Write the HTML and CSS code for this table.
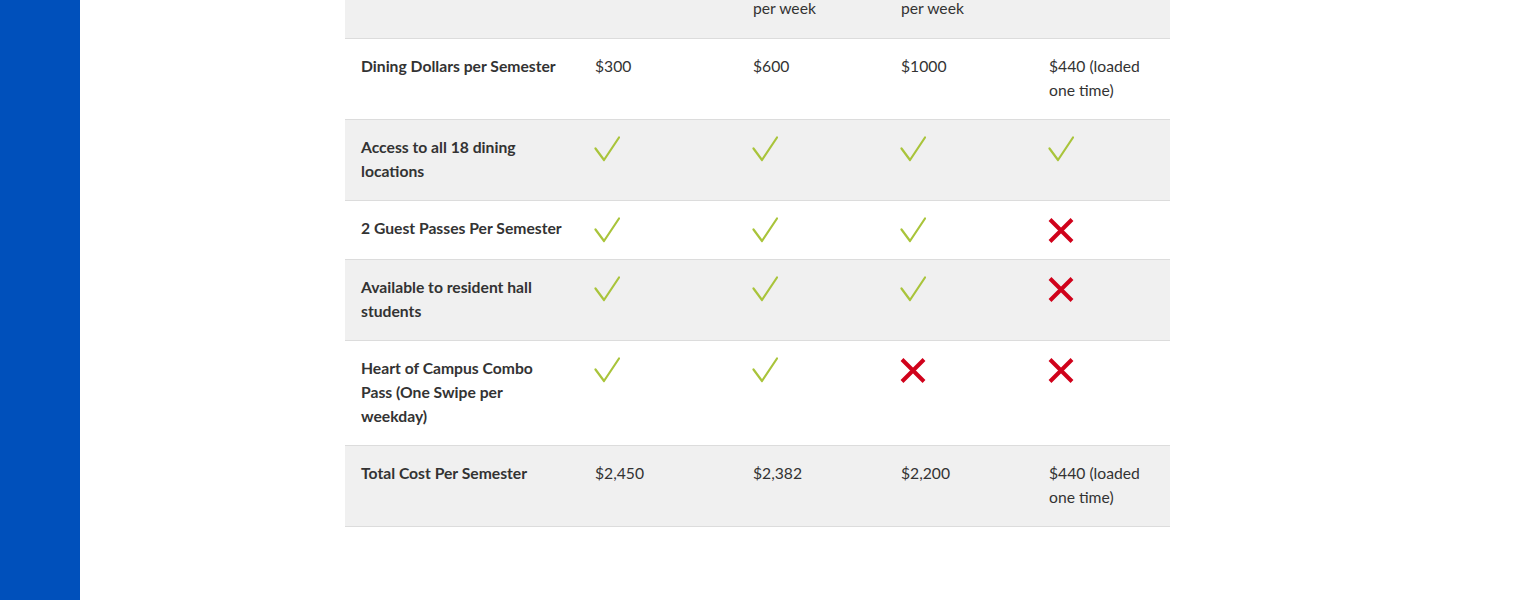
FILE: index.html
```html
<!DOCTYPE html>
<html lang="en">
<head>
<meta charset="utf-8">
<title>Meal Plans</title>
<link rel="stylesheet" href="styles.css">
</head>
<body>
<div class="page">
  <aside class="sidebar"></aside>
  <main class="main">
    <table class="plans">
      <tbody>
        <tr class="head-row">
          <td class="label"></td>
          <td></td>
          <td>per week</td>
          <td>per week</td>
          <td></td>
        </tr>
        <tr>
          <td class="label">Dining Dollars per Semester</td>
          <td>$300</td>
          <td>$600</td>
          <td>$1000</td>
          <td>$440 (loaded one time)</td>
        </tr>
        <tr>
          <td class="label">Access to all 18 dining locations</td>
          <td><svg class="ico" viewBox="0 0 26 26"><polyline class="yes" points="1.5,12.5 10,24 25,1.5"/></svg></td>
          <td><svg class="ico" viewBox="0 0 26 26"><polyline class="yes" points="1.5,12.5 10,24 25,1.5"/></svg></td>
          <td><svg class="ico" viewBox="0 0 26 26"><polyline class="yes" points="1.5,12.5 10,24 25,1.5"/></svg></td>
          <td><svg class="ico" viewBox="0 0 26 26"><polyline class="yes" points="1.5,12.5 10,24 25,1.5"/></svg></td>
        </tr>
        <tr>
          <td class="label">2 Guest Passes Per Semester</td>
          <td><svg class="ico" viewBox="0 0 26 26"><polyline class="yes" points="1.5,12.5 10,24 25,1.5"/></svg></td>
          <td><svg class="ico" viewBox="0 0 26 26"><polyline class="yes" points="1.5,12.5 10,24 25,1.5"/></svg></td>
          <td><svg class="ico" viewBox="0 0 26 26"><polyline class="yes" points="1.5,12.5 10,24 25,1.5"/></svg></td>
          <td><svg class="ico" viewBox="0 0 26 26"><path class="no" d="M2 2.5L24 24.5M24 2.5L2 24.5"/></svg></td>
        </tr>
        <tr>
          <td class="label">Available to resident hall students</td>
          <td><svg class="ico" viewBox="0 0 26 26"><polyline class="yes" points="1.5,12.5 10,24 25,1.5"/></svg></td>
          <td><svg class="ico" viewBox="0 0 26 26"><polyline class="yes" points="1.5,12.5 10,24 25,1.5"/></svg></td>
          <td><svg class="ico" viewBox="0 0 26 26"><polyline class="yes" points="1.5,12.5 10,24 25,1.5"/></svg></td>
          <td><svg class="ico" viewBox="0 0 26 26"><path class="no" d="M2 2.5L24 24.5M24 2.5L2 24.5"/></svg></td>
        </tr>
        <tr>
          <td class="label">Heart of Campus Combo Pass (One Swipe per weekday)</td>
          <td><svg class="ico" viewBox="0 0 26 26"><polyline class="yes" points="1.5,12.5 10,24 25,1.5"/></svg></td>
          <td><svg class="ico" viewBox="0 0 26 26"><polyline class="yes" points="1.5,12.5 10,24 25,1.5"/></svg></td>
          <td><svg class="ico" viewBox="0 0 26 26"><path class="no" d="M2 2.5L24 24.5M24 2.5L2 24.5"/></svg></td>
          <td><svg class="ico" viewBox="0 0 26 26"><path class="no" d="M2 2.5L24 24.5M24 2.5L2 24.5"/></svg></td>
        </tr>
        <tr>
          <td class="label">Total Cost Per Semester</td>
          <td>$2,450</td>
          <td>$2,382</td>
          <td>$2,200</td>
          <td>$440 (loaded one time)</td>
        </tr>
      </tbody>
    </table>
  </main>
</div>
</body>
</html>
```

FILE: styles.css
```css
html, body {
  margin: 0;
  padding: 0;
  background: #ffffff;
}
body {
  font-family: Lato, "Open Sans", sans-serif;
  color: #333333;
  overflow: hidden;
}
.page {
  display: flex;
  min-height: 600px;
}
.sidebar {
  flex: 0 0 80px;
  background: #0050bb;
  min-height: 600px;
}
.main {
  flex: 1;
  padding-left: 265px;
  margin-top: -4px;
}
.plans {
  width: 825px;
  border-collapse: collapse;
  font-size: 15.7px;
  line-height: 24px;
}
.plans td {
  padding: 15px 16px 17px;
  vertical-align: top;
  border-bottom: 1px solid #dcdcdc;
  text-align: left;
}
.plans td:nth-child(1) { width: 204px; padding-right: 14px; }
.plans td:nth-child(2) { width: 126px; }
.plans td:nth-child(3) { width: 116px; }
.plans td:nth-child(4) { width: 116px; }
.plans td:nth-child(5) { width: 105px; }
.plans tr:nth-child(odd) td {
  background: #f0f0f0;
}
.plans td.label {
  font-weight: 700;
}
.plans .head-row td {
  padding-top: 0;
  padding-bottom: 18px;
}
.ico {
  display: block;
  width: 26px;
  height: 26px;
  margin: 1px 0 -1px -1px;
}
.yes {
  fill: none;
  stroke: #a9c43b;
  stroke-width: 2.2;
  stroke-linecap: round;
  stroke-linejoin: round;
}
.no {
  fill: none;
  stroke: #d0021b;
  stroke-width: 4;
}
```
